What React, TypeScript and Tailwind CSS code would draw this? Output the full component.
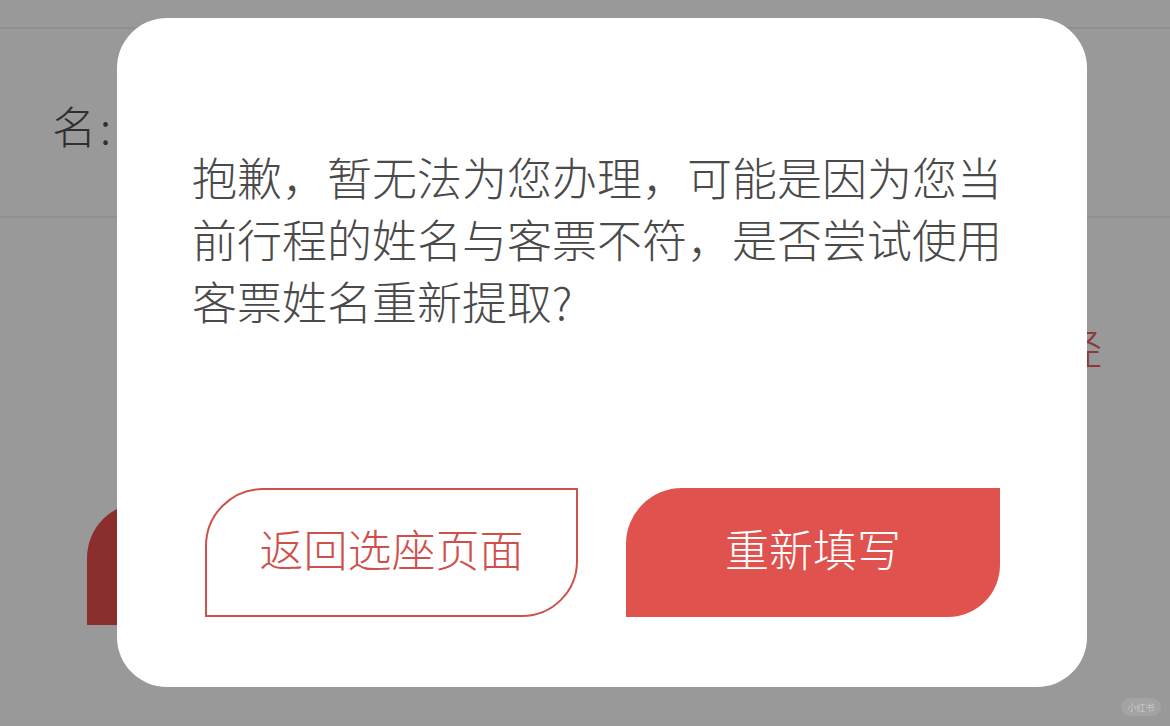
import React from "react";

const cjk = { fontFamily: '"Noto Sans CJK SC", "Noto Sans", sans-serif' };

export default function App() {
  return (
    <div className="relative w-[1170px] h-[726px] overflow-hidden bg-white" style={cjk}>
      {/* underlying page */}
      <div className="flex flex-col">
        <div className="h-[29px] border-b-2 border-[#f0f0f0]" />
        <div className="h-[189px] border-b-2 border-[#f0f0f0] flex items-start pt-[71px] pl-[52px]">
          <span className="text-[44px] leading-[50px] text-[#4f4f4f] font-light">名</span>
          <span className="text-[44px] leading-[50px] text-[#4f4f4f] font-light ml-[4px]">:</span>
        </div>
        <div className="flex justify-end pr-[68px] pt-[104px]">
          <span className="text-[42px] leading-[50px] text-[#e8605f] font-light">经</span>
        </div>
        <div className="pl-[87px] pr-[87px] pt-[131px]">
          <div className="h-[122px] bg-[#e64e4e] rounded-tl-[55px] rounded-br-[55px]" />
        </div>
      </div>

      {/* dim overlay */}
      <div className="absolute inset-0 bg-black/40 pl-[117px] pt-[18px]">
        <div className="w-[970px] h-[669px] bg-white rounded-[50px] flex flex-col pt-[128px]">
          <p className="pl-[75px] text-[45px] leading-[62px] text-[#4a4a4a] font-light whitespace-nowrap">
            抱歉，暂无法为您办理，可能是因为您当
            <br />
            前行程的姓名与客票不符，是否尝试使用
            <br />
            客票姓名重新提取?
          </p>
          <div className="flex gap-[48px] pl-[88px] mt-[156px]">
            <button className="w-[373px] h-[129px] pb-[10px] border-2 border-[#cc524c] rounded-tl-[58px] rounded-br-[56px] flex items-center justify-center text-[44px] leading-none text-[#cf4f4a] font-light">
              返回选座页面
            </button>
            <button className="w-[374px] h-[129px] pb-[10px] bg-[#e0524e] rounded-tl-[56px] rounded-br-[52px] flex items-center justify-center text-[44px] leading-none text-white font-light">
              重新填写
            </button>
          </div>
        </div>
      </div>

      {/* watermark */}
      <div className="absolute left-[1121px] top-[698px] w-[40px] h-[18px] rounded-full bg-white/10 flex items-center justify-center">
        <span className="text-[9px] leading-none text-white/40">小红书</span>
      </div>
    </div>
  );
}
